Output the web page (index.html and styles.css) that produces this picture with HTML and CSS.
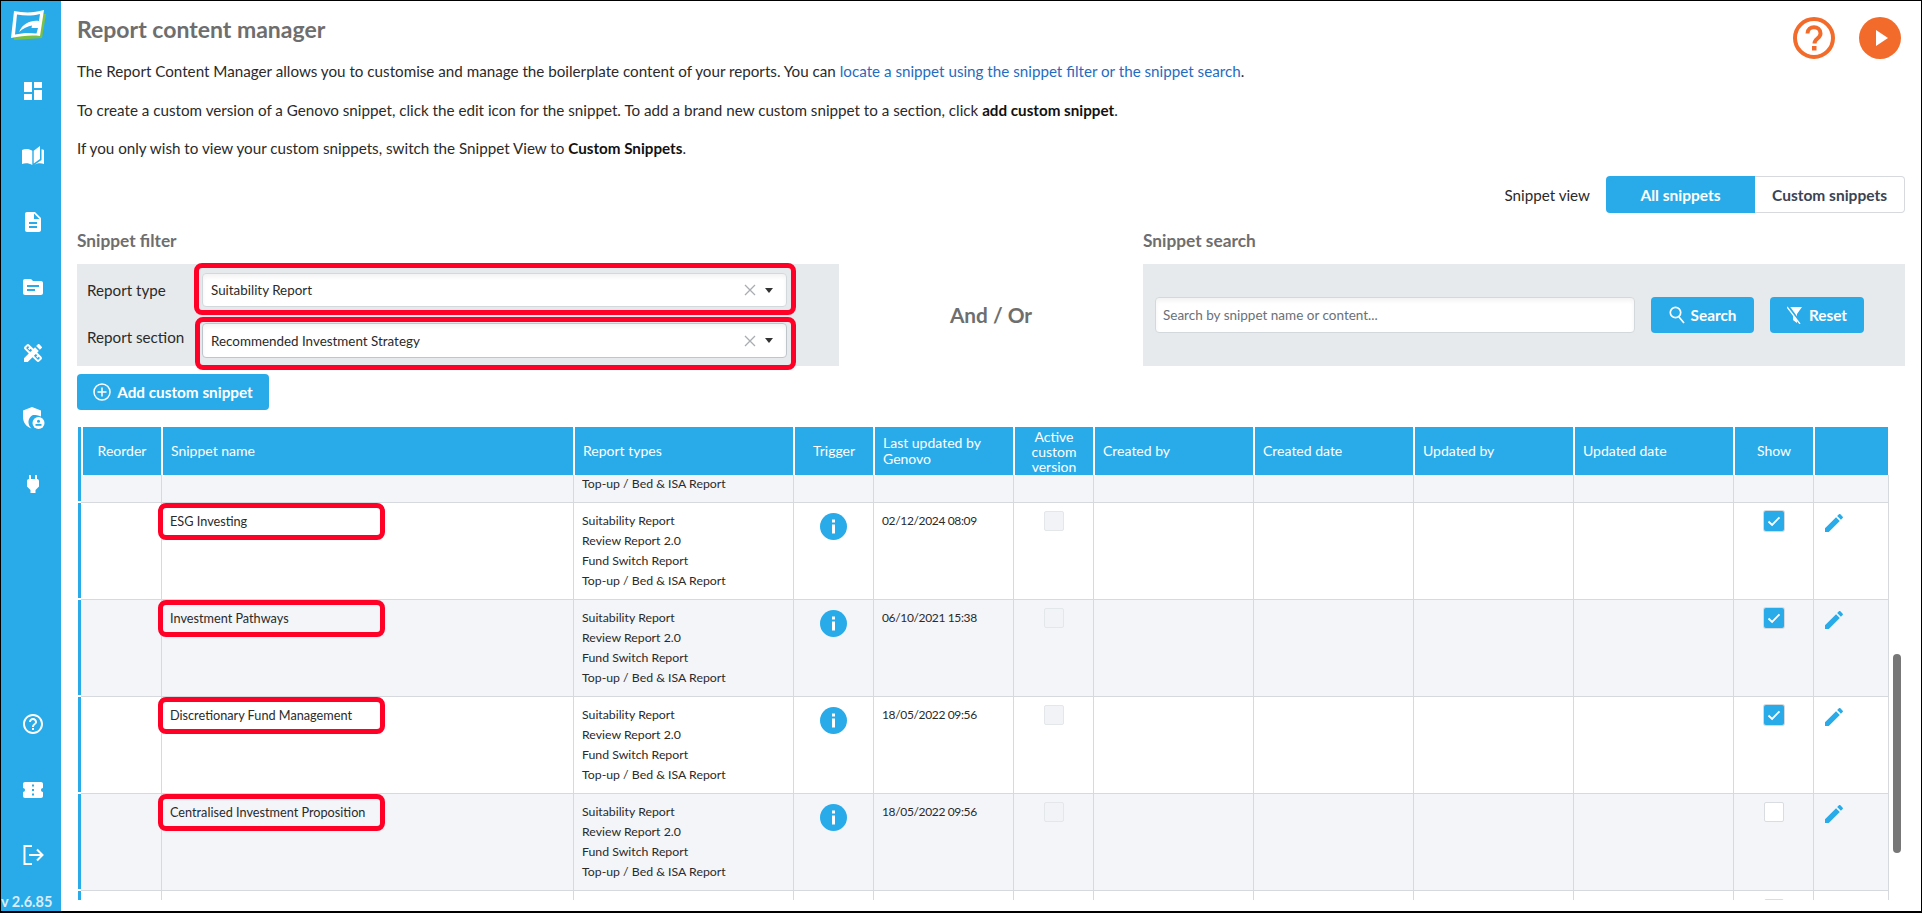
FILE: index.html
```html
<!DOCTYPE html>
<html lang="en">
<head>
<meta charset="utf-8">
<title>Report content manager</title>
<link rel="stylesheet" href="styles.css">
</head>
<body>
<svg class="defs" width="0" height="0">
  <symbol id="i-edit" viewBox="0 0 24 24"><path d="M3 17.250V21h3.750L17.810 9.940l-3.750-3.750L3 17.250zM20.710 7.040c.39-.39.39-1.020 0-1.410l-2.340-2.340c-.39-.39-1.020-.39-1.410 0l-1.830 1.830 3.750 3.750 1.830-1.830z"/></symbol>
  <symbol id="i-info" viewBox="0 0 27 27"><circle cx="13.500" cy="13.500" r="13.500"/><rect x="12" y="11.500" width="3" height="9" fill="#fff"/><rect x="12" y="6.500" width="3" height="3" fill="#fff"/></symbol>
  <symbol id="i-check" viewBox="0 0 20 20"><path d="M4.500 10.500l3.600 3.400 7.400-7.600" fill="none" stroke="#fff" stroke-width="1.800"/></symbol>
  <symbol id="i-x" viewBox="0 0 14 14"><path d="M2 2l10 10M12 2L2 12" fill="none" stroke="#a9adb1" stroke-width="1.300"/></symbol>
</svg>
<div class="app">
  <nav class="sidebar">
    <svg class="logo" viewBox="0 0 36 32" width="36" height="32">
      <path d="M6 5L35 4 31 28 3 30z" fill="#7ac143"/>
      <path d="M3 1C13 3 23 3 33 0L29 26C20 25 10 26 0 28z" fill="#fff"/>
      <path d="M6 4.500C14 6 21 6 29 4L28 11C20 10 12 13 8 22 13 18 17 16 21 15.500L20.500 18H27L25.500 23.500C18 22.500 11 23 4 24.500z" fill="#29abe9"/>
    </svg>
    <ul class="nav-top">
      <li><svg viewBox="0 0 24 24"><path d="M3 13h8V3H3v10zm0 8h8v-6H3v6zm10 0h8V11h-8v10zm0-18v6h8V3h-8z"/></svg></li>
      <li><svg viewBox="0 0 24 24"><path d="M1 6c3-1.500 7-1.500 10.300.8V21C8 19 4 19 1 20z"/><path d="M12.700 6.800L19 2v13l-6.300 4.500z"/><path d="M20.500 5.300c.9.1 1.700.4 2.500.7v14c-3-1-7-1-10 1l7.500-5z"/></svg></li>
      <li><svg viewBox="0 0 24 24"><path d="M14 2H6c-1.100 0-2 .9-2 2v16c0 1.100.9 2 2 2h12c1.100 0 2-.9 2-2V8l-6-6zm2 16H8v-2h8v2zm0-4H8v-2h8v2zm-3-5V3.500L18.500 9H13z"/></svg></li>
      <li><svg viewBox="0 0 24 24"><path d="M20 6h-8l-2-2H4c-1.100 0-1.990.9-1.990 2L2 18c0 1.100.9 2 2 2h16c1.100 0 2-.9 2-2V8c0-1.100-.9-2-2-2zm-6 10H6v-2h8v2zm4-4H6v-2h12v2z"/></svg></li>
      <li><svg viewBox="0 0 24 24"><path d="M16.240 11.510l1.570-1.570-3.750-3.750-1.570 1.570-4.140-4.130c-.78-.78-2.050-.78-2.830 0l-1.900 1.900c-.78.78-.78 2.050 0 2.830l4.130 4.130L3 17.250V21h3.750l4.760-4.760 4.130 4.130c.95.95 2.230.6 2.830 0l1.900-1.900c.78-.78.78-2.050 0-2.830l-4.130-4.130zm-7.060-.44L5.040 6.940l1.890-1.900L8.200 6.310 7.020 7.500l1.410 1.410 1.190-1.190 1.450 1.450-1.890 1.900zm7.880 7.890l-4.130-4.140 1.900-1.900 1.450 1.450-1.190 1.190 1.410 1.410 1.190-1.190 1.270 1.270-1.900 1.910zM20.710 7.040a.996.996 0 000-1.410l-2.340-2.340c-.47-.47-1.120-.29-1.410 0l-1.830 1.830 3.750 3.750 1.830-1.830z"/></svg></li>
      <li><svg viewBox="0 0 24 24"><path d="M11 1L2 4.500V11c0 5.500 3.500 10 8.500 11.500A8 8 0 0112 9c2 0 4-.2 8 1.500V4.500z"/><circle cx="17.500" cy="17" r="6"/><circle cx="17.500" cy="15.300" r="1.500" fill="#29abe9"/><rect x="14.500" y="18" width="6" height="1.800" fill="#29abe9"/></svg></li>
      <li><svg viewBox="0 0 24 24"><path d="M16.010 7L16 3h-2v4h-4V3H8v4h-.01C7 6.990 6 7.990 6 8.990v5.490L9.500 18v3h5v-3l3.500-3.510v-5.500c0-1-1-2-1.990-1.990z"/></svg></li>
    </ul>
    <ul class="nav-bottom">
      <li><svg viewBox="0 0 24 24"><path d="M11 18h2v-2h-2v2zm1-16C6.480 2 2 6.480 2 12s4.480 10 10 10 10-4.480 10-10S17.520 2 12 2zm0 18c-4.410 0-8-3.590-8-8s3.590-8 8-8 8 3.590 8 8-3.590 8-8 8zm0-14c-2.210 0-4 1.790-4 4h2c0-1.100.9-2 2-2s2 .9 2 2c0 2-3 1.750-3 5h2c0-2.250 3-2.500 3-5 0-2.210-1.790-4-4-4z"/></svg></li>
      <li><svg viewBox="0 0 24 24"><path d="M22 10V6c0-1.110-.9-2-2-2H4c-1.100 0-1.990.89-1.990 2v4c1.100 0 1.990.9 1.990 2s-.89 2-2 2v4c0 1.100.9 2 2 2h16c1.100 0 2-.9 2-2v-4c-1.100 0-2-.9-2-2s.9-2 2-2zm-9 7.500h-2v-2h2v2zm0-4.500h-2v-2h2v2zm0-4.500h-2v-2h2v2z"/></svg></li>
      <li><svg viewBox="0 0 24 24"><path d="M11 3H3.500v18H11" fill="none" stroke="#fff" stroke-width="2"/><path d="M8 12h13M16 6.500l5.500 5.500-5.500 5.500" fill="none" stroke="#fff" stroke-width="2"/></svg></li>
    </ul>
    <div class="version">v 2.6.85</div>
  </nav>

  <main class="main">
    <header class="head">
      <h1>Report content manager</h1>
      <div class="head-actions">
        <svg width="42" height="42" viewBox="0 0 42 42"><circle cx="21" cy="21" r="19" fill="none" stroke="#f26b2a" stroke-width="4"/><path d="M14.500 16.500c0-8.500 13-8.500 13 0 0 5-6 5-6 10" fill="none" stroke="#f26b2a" stroke-width="4"/><rect x="19" y="29" width="4.500" height="4.500" fill="#f26b2a"/></svg>
        <svg width="42" height="42" viewBox="0 0 42 42"><circle cx="21" cy="21" r="21" fill="#f26b2a"/><path d="M17 13L29 21l-12 8z" fill="#fff"/></svg>
      </div>
    </header>

    <section class="intro">
      <p>The Report Content Manager allows you to customise and manage the boilerplate content of your reports. You can <a href="#">locate a snippet using the snippet filter or the snippet search</a>.</p>
      <p>To create a custom version of a Genovo snippet, click the edit icon for the snippet. To add a brand new custom snippet to a section, click <b>add custom snippet</b>.</p>
      <p>If you only wish to view your custom snippets, switch the Snippet View to <b>Custom Snippets</b>.</p>
    </section>

    <div class="view-row">
      <span class="view-label">Snippet view</span>
      <div class="toggle">
        <span class="toggle-on">All snippets</span>
        <span class="toggle-off">Custom snippets</span>
      </div>
    </div>

    <div class="tools">
      <section>
        <h2>Snippet filter</h2>
        <div class="panel filter">
          <label class="label">Report type</label>
          <div class="select-wrap">
            <div class="select"><span>Suitability Report</span><svg class="clear"><use href="#i-x"/></svg><i class="caret"></i></div>
            <span class="mark mark-type"></span>
          </div>
          <label class="label label-up">Report section</label>
          <div class="select-wrap">
            <div class="select select-dark"><span>Recommended Investment Strategy</span><svg class="clear"><use href="#i-x"/></svg><i class="caret"></i></div>
            <span class="mark mark-section"></span>
          </div>
        </div>
      </section>
      <div class="andor">And / Or</div>
      <section>
        <h2>Snippet search</h2>
        <div class="panel search">
          <div class="input">Search by snippet name or content...</div>
          <button class="btn btn-search">
            <svg width="16" height="18" viewBox="0 0 16 18" fill="none" stroke="#fff" stroke-width="1.700"><circle cx="6.500" cy="6.500" r="5.200"/><path d="M10 11l5 6"/></svg>Search
          </button>
          <button class="btn btn-reset">
            <svg width="16" height="18" viewBox="0 0 16 18"><path d="M1 1h14L10 8v9l-4-3V8z" fill="#fff"/><path d="M1 0l13 18" stroke="#29abe9" stroke-width="2.500"/><path d="M0 1l13 17" stroke="#fff" stroke-width="1.300"/></svg>Reset
          </button>
        </div>
      </section>
    </div>

    <button class="btn btn-add">
      <svg width="18" height="18" viewBox="0 0 18 18" fill="none" stroke="#fff" stroke-width="1.500"><circle cx="9" cy="9" r="8"/><path d="M9 4.500v9M4.500 9h9"/></svg>Add custom snippet
    </button>

    <div class="table-wrap">
      <table class="grid">
        <colgroup>
          <col class="c-stripe"><col class="c-reorder"><col class="c-name"><col class="c-types"><col class="c-trigger"><col class="c-last"><col class="c-active"><col class="c-wide"><col class="c-wide"><col class="c-wide"><col class="c-wide"><col class="c-show"><col class="c-edit">
        </colgroup>
        <thead>
          <tr>
            <th class="stripe"></th><th class="center">Reorder</th><th>Snippet name</th><th>Report types</th><th class="center">Trigger</th><th>Last updated by Genovo</th><th class="center tight">Active custom version</th><th>Created by</th><th>Created date</th><th>Updated by</th><th>Updated date</th><th class="center">Show</th><th></th>
          </tr>
        </thead>
        <tbody>
          <tr class="alt partial">
            <td class="stripe"></td><td></td><td></td><td class="types"><div class="cut">Top-up / Bed &amp; ISA Report</div></td><td></td><td></td><td></td><td></td><td></td><td></td><td></td><td></td><td></td>
          </tr>
          <tr>
            <td class="stripe"></td><td></td><td class="name">ESG Investing<span class="mark mark-name"></span></td>
            <td class="types">Suitability Report<br>Review Report 2.0<br>Fund Switch Report<br>Top-up / Bed &amp; ISA Report</td>
            <td class="center"><svg class="info"><use href="#i-info"/></svg></td><td class="date">02/12/2024 08:09</td>
            <td class="center"><i class="box box-off"></i></td><td></td><td></td><td></td><td></td>
            <td class="center"><i class="box box-on"><svg><use href="#i-check"/></svg></i></td><td><svg class="edit"><use href="#i-edit"/></svg></td>
          </tr>
          <tr class="alt">
            <td class="stripe"></td><td></td><td class="name">Investment Pathways<span class="mark mark-name"></span></td>
            <td class="types">Suitability Report<br>Review Report 2.0<br>Fund Switch Report<br>Top-up / Bed &amp; ISA Report</td>
            <td class="center"><svg class="info"><use href="#i-info"/></svg></td><td class="date">06/10/2021 15:38</td>
            <td class="center"><i class="box box-off"></i></td><td></td><td></td><td></td><td></td>
            <td class="center"><i class="box box-on"><svg><use href="#i-check"/></svg></i></td><td><svg class="edit"><use href="#i-edit"/></svg></td>
          </tr>
          <tr>
            <td class="stripe"></td><td></td><td class="name">Discretionary Fund Management<span class="mark mark-name"></span></td>
            <td class="types">Suitability Report<br>Review Report 2.0<br>Fund Switch Report<br>Top-up / Bed &amp; ISA Report</td>
            <td class="center"><svg class="info"><use href="#i-info"/></svg></td><td class="date">18/05/2022 09:56</td>
            <td class="center"><i class="box box-off"></i></td><td></td><td></td><td></td><td></td>
            <td class="center"><i class="box box-on"><svg><use href="#i-check"/></svg></i></td><td><svg class="edit"><use href="#i-edit"/></svg></td>
          </tr>
          <tr class="alt">
            <td class="stripe"></td><td></td><td class="name">Centralised Investment Proposition<span class="mark mark-name"></span></td>
            <td class="types">Suitability Report<br>Review Report 2.0<br>Fund Switch Report<br>Top-up / Bed &amp; ISA Report</td>
            <td class="center"><svg class="info"><use href="#i-info"/></svg></td><td class="date">18/05/2022 09:56</td>
            <td class="center"><i class="box box-off"></i></td><td></td><td></td><td></td><td></td>
            <td class="center"><i class="box box-empty"></i></td><td><svg class="edit"><use href="#i-edit"/></svg></td>
          </tr>
          <tr class="last">
            <td class="stripe"></td><td></td><td></td><td></td><td></td><td></td><td></td><td></td><td></td><td></td><td></td>
            <td class="center"><i class="box box-empty"></i></td><td></td>
          </tr>
        </tbody>
      </table>
      <div class="thumb"></div>
    </div>
  </main>
</div>
</body>
</html>
```

FILE: styles.css
```css
* { box-sizing: border-box; }
html, body { margin: 0; height: 100%; }
body {
  font-family: "Lato", "Noto Sans", sans-serif;
  font-size: 15.200px;
  color: #2a2a2a;
  background: #fff;
  overflow: hidden;
}
.defs { position: absolute; }
.app {
  display: flex;
  width: 1922px;
  height: 913px;
  border: 1px solid #000;
  border-bottom-width: 2px;
  overflow: hidden;
}

/* sidebar */
.sidebar {
  position: relative;
  flex: 0 0 60px;
  display: flex;
  flex-direction: column;
  align-items: center;
  background: #29abe9;
}
.logo { margin-top: 9px; margin-right: 4px; }
.sidebar ul { list-style: none; margin: 0; padding: 0; }
.sidebar li { display: flex; justify-content: center; align-items: center; height: 65.500px; padding-left: 4px; }
.sidebar li svg { width: 24px; height: 24px; fill: #fff; }
.sidebar .nav-top { margin-top: 16px; }
.sidebar .nav-bottom { margin-top: auto; margin-bottom: 23px; }
.version {
  position: absolute;
  left: 0;
  bottom: 1px;
  font-size: 14.500px;
  font-weight: 700;
  color: #d9edf8;
  white-space: nowrap;
}

/* main */
.main { flex: 1; min-width: 0; padding: 0 16px; display: flex; flex-direction: column; align-items: stretch; }
.head { display: flex; justify-content: space-between; height: 30px; margin-top: 13px; }
h1 { margin: 0; font-size: 23px; line-height: 30px; font-weight: 700; color: #6e6e6e; }
.head-actions { display: flex; gap: 24px; height: 42px; margin-top: 3px; margin-right: 4px; }
.intro { margin-top: 17px; }
.intro p { margin: 0 0 18.500px; line-height: 20px; }
.intro p:last-child { margin-bottom: 0; }
.intro a { color: #1f6cc0; text-decoration: none; }
.intro b { color: #111; }

.view-row { display: flex; justify-content: flex-end; align-items: center; gap: 16px; margin-top: 18px; height: 37px; }
.toggle { display: flex; height: 37px; font-weight: 700; font-size: 15.500px; }
.toggle span { display: flex; align-items: center; justify-content: center; }
.toggle-on { width: 149px; background: #29abe9; color: #fff; border-radius: 4px 0 0 4px; }
.toggle-off { width: 150px; border: 1px solid #d6dadf; border-left: 0; border-radius: 0 4px 4px 0; color: #3a4454; }

.tools { display: grid; grid-template-columns: 762px 1fr 762px; margin-top: 18px; }
h2 { margin: 0 0 13px; font-size: 17.300px; line-height: 20px; font-weight: 700; color: #6e6e6e; }
.panel { height: 102px; background: #e6eaec; }
.andor { align-self: end; height: 102px; line-height: 102px; text-align: center; font-size: 20.800px; font-weight: 700; color: #6e6e6e; }

.filter { display: grid; grid-template-columns: 115px 585px; grid-template-rows: 34px 35px; row-gap: 16px; padding: 9px 0 0 10px; }
.label { align-self: center; line-height: 20px; }
.label-up { margin-bottom: 8px; }
.select-wrap { position: relative; }
.select {
  display: flex;
  align-items: center;
  height: 100%;
  padding: 0 8px;
  background: #fff;
  border: 1px solid #d3d8dc;
  border-radius: 4px;
  box-shadow: inset 0 3px 4px rgba(0,0,0,.05);
  font-size: 13.400px;
}
.select-dark { border-color: #bfc6cb; }
.select span { flex: 1; }
.clear { width: 14px; height: 14px; }
.caret { margin: 0 5px 0 8px; border: 4px solid transparent; border-top: 5px solid #333; border-bottom: 0; }

.mark { position: absolute; border: 5px solid #ff0027; pointer-events: none; }
.mark-type { left: -8px; right: -9px; top: -10px; bottom: -8px; border-radius: 8px; }
.mark-section { left: -7px; right: -9px; top: -6px; bottom: -12px; border-radius: 8px; }
.mark-name { left: -4px; top: 0; width: 227px; height: 37px; border-radius: 8px; }

.search { display: flex; align-items: center; padding-left: 12px; }
.input {
  width: 480px;
  height: 36px;
  line-height: 34px;
  padding: 0 7px;
  margin-right: 16px;
  background: #fff;
  border: 1px solid #d3d8dc;
  border-radius: 4px;
  box-shadow: inset 0 3px 4px rgba(0,0,0,.05);
  font-size: 13.500px;
  color: #6a7077;
}
.btn {
  display: inline-flex;
  align-items: center;
  justify-content: center;
  gap: 6px;
  height: 36px;
  padding: 0;
  background: #29abe9;
  color: #fff;
  border: 0;
  border-radius: 4px;
  font: 700 15.300px "Lato", "Noto Sans", sans-serif;
}
.btn-search { width: 103px; margin-right: 16px; }
.btn-reset { width: 94px; }
.btn-add { align-self: flex-start; width: 192px; margin-top: 8px; }

/* table */
.table-wrap { position: relative; flex: none; height: 473px; margin-top: 17px; overflow: hidden; }
.grid { table-layout: fixed; width: 1811px; margin-left: 1px; border-collapse: separate; border-spacing: 0; font-size: 12.700px; line-height: 20px; }
.c-stripe { width: 3px; }
.c-reorder { width: 81px; }
.c-name { width: 412px; }
.c-types { width: 220px; }
.c-trigger { width: 80px; }
.c-last { width: 140px; }
.c-active { width: 80px; }
.c-wide { width: 160px; }
.c-show { width: 80px; }
.c-edit { width: 75px; }

th {
  height: 48px;
  padding: 0 8px;
  background: #29abe9;
  color: #fff;
  font-size: 14px;
  font-weight: 400;
  line-height: 16px;
  text-align: left;
  border-left: 1px solid #fff;
  border-right: 1px solid #fff;
}
th.tight { padding: 0; line-height: 15px; }
th.stripe { border: 0; }
th:nth-child(2) { border-left: 2px solid #fff; }
.center { text-align: center; }

td {
  position: relative;
  height: 97px;
  padding: 8px;
  vertical-align: top;
  border-right: 1px solid #d6dade;
  border-bottom: 1px solid #d6dade;
}
td.stripe { padding: 0; background: #29abe9; border-right: 0; border-bottom: 2px solid #fff; }
.alt td:not(.stripe) { background: #f3f5f9; }
.partial td { height: 28px; padding: 0 8px; }
.cut { height: 19px; line-height: 17px; overflow: hidden; }
.types { font-size: 12.300px; }
.date { font-size: 12px; letter-spacing: -.35px; }

.info { display: inline-block; width: 27px; height: 27px; margin-top: 2px; fill: #29abe9; }
.box { display: inline-block; width: 20px; height: 20px; border-radius: 2px; vertical-align: top; }
.box svg { display: block; width: 20px; height: 20px; }
.box-off { background: #f1f3f6; border: 1px solid #e4e7ea; }
.box-on { background: #29abe9; box-shadow: 0 0 0 1px #d5dade; }
.box-empty { background: #fff; border: 1px solid #d9dde1; }
.edit { display: block; width: 24px; height: 24px; fill: #29abe9; }

.thumb { position: absolute; right: 4px; top: 227px; width: 8px; height: 199px; border-radius: 4px; background: #777; }
```
